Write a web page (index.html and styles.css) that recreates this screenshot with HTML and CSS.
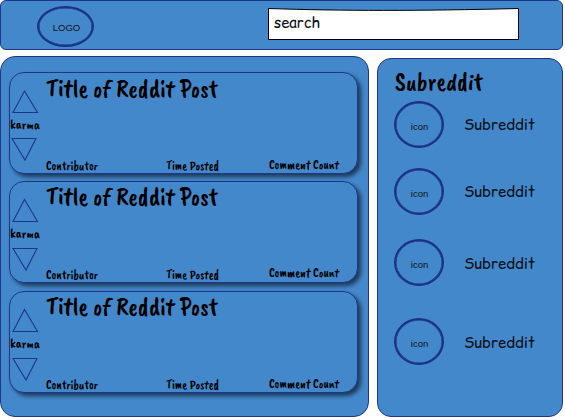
FILE: index.html
```html
<!DOCTYPE html>
<html lang="en">
<head>
<meta charset="utf-8">
<title>Reddit wireframe</title>
<link rel="stylesheet" href="styles.css">
</head>
<body>
<header class="topbar">
  <div class="logo"><span>LOGO</span></div>
  <svg class="search" width="252" height="33" viewBox="0 0 252 33">
    <path class="search-box" d="M.5 .5 C75 3 150 3 250.5 .5 V31.5 H.5Z"/>
    <text class="comic" x="6" y="20" textLength="46" lengthAdjust="spacingAndGlyphs">search</text>
  </svg>
</header>
<div class="columns">
  <main class="feed">
    <article class="post first">
      <svg class="votes" width="32" height="100" viewBox="0 0 32 100">
        <path class="arrow" d="M14.5 18 L27.5 39.5 H3Z"/>
        <text class="brush small" x="0" y="56" textLength="30" lengthAdjust="spacingAndGlyphs">karma</text>
        <path class="arrow" d="M2 65.5 H26 L15 87Z"/>
      </svg>
      <div class="body">
        <svg class="title" width="180" height="34"><text class="brush heading" x="0" y="24" textLength="172" lengthAdjust="spacingAndGlyphs">Title of Reddit Post</text></svg>
        <div class="meta">
          <svg width="120" height="18"><text class="brush small" x="0" y="14" textLength="52" lengthAdjust="spacingAndGlyphs">Contributor</text></svg>
          <svg width="103" height="18"><text class="brush small" x="0" y="14" textLength="53" lengthAdjust="spacingAndGlyphs">Time Posted</text></svg>
          <svg width="72" height="18"><text class="brush small" x="0" y="13" textLength="70" lengthAdjust="spacingAndGlyphs">Comment Count</text></svg>
        </div>
      </div>
    </article>
    <article class="post">
      <svg class="votes" width="32" height="100" viewBox="0 0 32 100">
        <path class="arrow" d="M14.5 17.5 L27.5 39.5 H3Z"/>
        <text class="brush small" x="0" y="56" textLength="30" lengthAdjust="spacingAndGlyphs">karma</text>
        <path class="arrow" d="M3 66.5 H27 L16 88Z"/>
      </svg>
      <div class="body">
        <svg class="title" width="180" height="34"><text class="brush heading" x="0" y="23" textLength="172" lengthAdjust="spacingAndGlyphs">Title of Reddit Post</text></svg>
        <div class="meta">
          <svg width="120" height="18"><text class="brush small" x="0" y="14" textLength="52" lengthAdjust="spacingAndGlyphs">Contributor</text></svg>
          <svg width="103" height="18"><text class="brush small" x="0" y="14" textLength="53" lengthAdjust="spacingAndGlyphs">Time Posted</text></svg>
          <svg width="72" height="18"><text class="brush small" x="0" y="12" textLength="70" lengthAdjust="spacingAndGlyphs">Comment Count</text></svg>
        </div>
      </div>
    </article>
    <article class="post">
      <svg class="votes" width="32" height="100" viewBox="0 0 32 100">
        <path class="arrow" d="M14.5 17.5 L27.5 39.5 H3Z"/>
        <text class="brush small" x="0" y="56" textLength="30" lengthAdjust="spacingAndGlyphs">karma</text>
        <path class="arrow" d="M3 66.5 H27 L16 88Z"/>
      </svg>
      <div class="body">
        <svg class="title" width="180" height="34"><text class="brush heading" x="0" y="23" textLength="172" lengthAdjust="spacingAndGlyphs">Title of Reddit Post</text></svg>
        <div class="meta">
          <svg width="120" height="18"><text class="brush small" x="0" y="14" textLength="52" lengthAdjust="spacingAndGlyphs">Contributor</text></svg>
          <svg width="103" height="18"><text class="brush small" x="0" y="14" textLength="53" lengthAdjust="spacingAndGlyphs">Time Posted</text></svg>
          <svg width="72" height="18"><text class="brush small" x="0" y="13" textLength="70" lengthAdjust="spacingAndGlyphs">Comment Count</text></svg>
        </div>
      </div>
    </article>
  </main>
  <aside class="sidebar">
    <svg class="side-title" width="100" height="42"><text class="brush heading" x="0" y="31" textLength="88" lengthAdjust="spacingAndGlyphs">Subreddit</text></svg>
    <ul class="subs">
      <li><div class="icon"><span>icon</span></div><svg width="74" height="24"><text class="comic" x="0" y="17" textLength="71" lengthAdjust="spacingAndGlyphs">Subreddit</text></svg></li>
      <li><div class="icon"><span>icon</span></div><svg width="74" height="24"><text class="comic" x="0" y="17" textLength="71" lengthAdjust="spacingAndGlyphs">Subreddit</text></svg></li>
      <li><div class="icon"><span>icon</span></div><svg width="74" height="24"><text class="comic" x="0" y="18" textLength="71" lengthAdjust="spacingAndGlyphs">Subreddit</text></svg></li>
      <li><div class="icon"><span>icon</span></div><svg width="74" height="24"><text class="comic" x="0" y="18" textLength="71" lengthAdjust="spacingAndGlyphs">Subreddit</text></svg></li>
    </ul>
  </aside>
</div>
</body>
</html>
```
FILE: styles.css
```css
* { box-sizing: border-box; }
body {
  margin: 0;
  height: 420px;
  overflow: hidden;
  background: #fff;
  font-family: "Liberation Sans", sans-serif;
  color: #000;
}
svg { display: block; flex: none; overflow: visible; }
.topbar, .feed, .post, .sidebar {
  background: #4488cc;
  border: 1px solid #1f358c;
}
.topbar {
  width: 563px;
  height: 50px;
  border-radius: 6px;
  display: flex;
  align-items: flex-start;
  padding: 5px 0 0 36px;
}
.logo, .icon {
  display: flex;
  align-items: center;
  justify-content: center;
  border: 2px solid #1c3186;
  border-radius: 50%;
  box-shadow: inset 0 0 0 .5px #1c3186;
  color: #111;
}
.logo {
  width: 57px;
  height: 41px;
  font-size: 9.5px;
  padding: 2px 0 0 2px;
}
.search { margin: 2px 0 0 174px; }
.search-box { fill: #fff; stroke: #000; }
.columns { display: flex; gap: 8px; margin-top: 6px; }
.feed {
  width: 369px;
  height: 361px;
  border-radius: 15px;
  padding: 15px 0 0 8px;
  display: flex;
  flex-direction: column;
  gap: 8px;
}
.post {
  width: 349px;
  height: 102px;
  border-radius: 15px;
  box-shadow: 3px 3px 4px rgba(0, 0, 0, .58);
  display: flex;
}
.post.first { margin-bottom: -1px; }
.arrow { fill: none; stroke: #1f358c; stroke-width: 1.1; }
.body { margin-left: 4px; }
.meta { display: flex; margin-top: 49px; }
.brush { font-family: "Caveat Brush", Lato, sans-serif; font-weight: 400; fill: #000; }
.heading { font-size: 26px; }
.small { font-size: 13px; }
.comic { font-family: "Comic Relief", "Comic Sans MS", "Comic Neue", Lato, sans-serif; font-size: 16px; fill: #0b1117; }
.sidebar {
  width: 186px;
  height: 359px;
  margin-top: 2px;
  border-radius: 14px;
  padding-left: 16px;
}
.side-title { margin-left: 1px; }
.subs { margin: 0; padding: 0; list-style: none; }
.subs li { display: flex; align-items: center; gap: 20px; height: 47px; }
.subs li + li { margin-top: 20px; }
.subs li:nth-child(3) { margin-top: 24px; }
.subs li:nth-child(4) { margin-top: 32px; }
.icon { width: 50px; height: 47px; font-size: 9.5px; padding: 3px 0 0 1px; }
```
